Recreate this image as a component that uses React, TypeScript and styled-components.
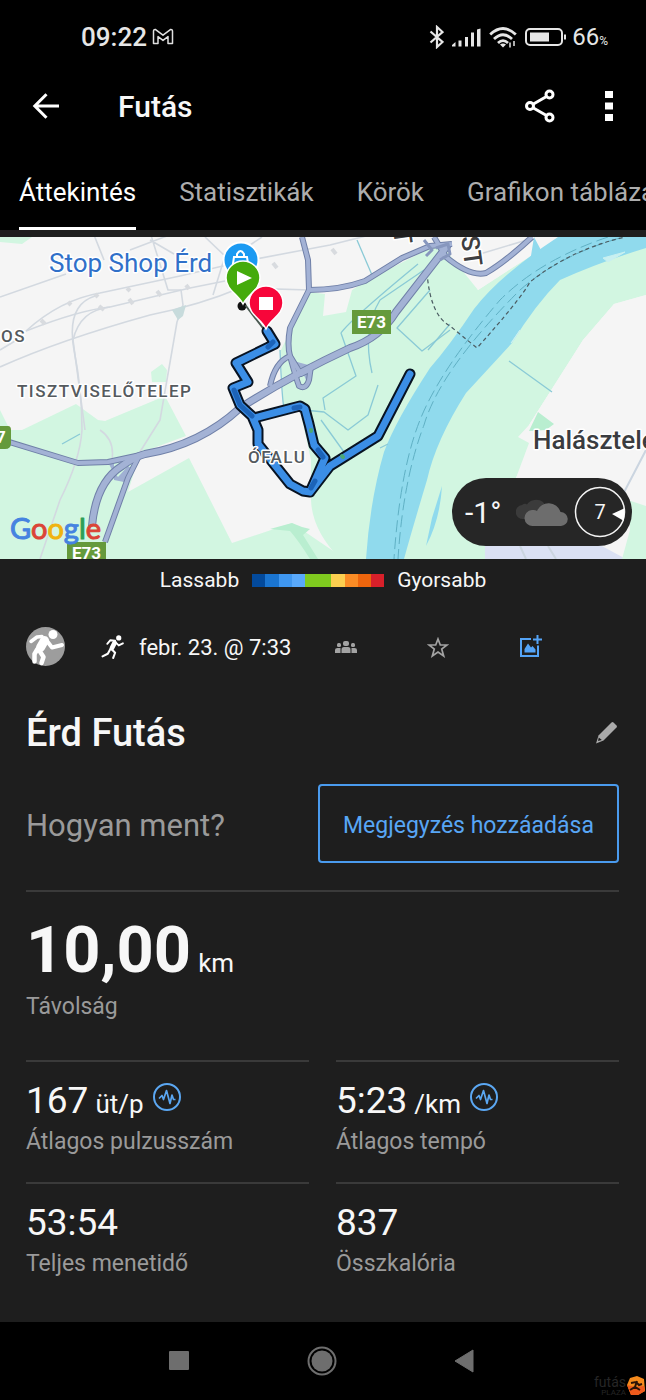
import React from "react";
import styled, { createGlobalStyle } from "styled-components";

const GlobalStyle = createGlobalStyle`
  * { box-sizing: border-box; }
  body { margin: 0; background: #000; color: #f7f7f7; font-family: Roboto, "Noto Sans", sans-serif; overflow-x: hidden; }
  button { font: inherit; color: inherit; background: none; border: 0; padding: 0; cursor: pointer; }
  h1, h2, p, dl, dd { margin: 0; font-weight: inherit; }
  svg { display: block; }
`;

const Screen = styled.div`
  min-height: 100vh;
  display: flex;
  flex-direction: column;
  background: #1e1e1e;
`;

const TopArea = styled.header`
  background: #000;
`;

const StatusBar = styled.div`
  height: 74px;
  padding: 0 38px 0 81px;
  display: flex;
  align-items: center;
  justify-content: space-between;
  color: #e6e6e6;
`;

const StatusGroup = styled.div<{ $gap: number }>`
  display: flex;
  align-items: center;
  gap: ${(p) => p.$gap}px;
`;

const Clock = styled.span`
  font-size: 26px;
  font-weight: 500;
`;

const Percent = styled.span`
  font-size: 24px;
  small { font-size: 12px; }
`;

const AppBar = styled.div`
  height: 64px;
  padding: 0 33px 0 32px;
  display: flex;
  align-items: center;
`;

const AppTitle = styled.h1`
  flex: 1;
  margin-left: 58px;
  font-size: 30px;
  font-weight: 500;
`;

const IconButton = styled.button<{ $width?: number }>`
  display: flex;
  align-items: center;
  justify-content: center;
  flex: none;
  height: 40px;
  width: ${(p) => (p.$width ? `${p.$width}px` : "auto")};
`;

const AppActions = styled.div`
  display: flex;
  gap: 50px;
`;

const Tabs = styled.nav`
  display: flex;
  gap: 43px;
  margin-top: 16px;
  padding-left: 19px;
  overflow: hidden;
`;

const Tab = styled.button<{ $active?: boolean }>`
  flex: none;
  height: 76px;
  padding-top: 3px;
  font-size: 26px;
  white-space: nowrap;
  color: ${(p) => (p.$active ? "#fff" : "#adadad")};
  border-bottom: 3px solid ${(p) => (p.$active ? "#fff" : "transparent")};
`;

const MapPanel = styled.section`
  position: relative;
  height: 322px;
  margin-top: 7px;
  overflow: hidden;
`;

const MapDrawing = styled.svg`
  width: 100%;
  height: 100%;
`;

const WeatherPill = styled.div`
  position: absolute;
  right: 14px;
  bottom: 13px;
  height: 68px;
  width: 180px;
  padding: 0 6px 0 13px;
  border-radius: 34px;
  background: #262626;
  display: flex;
  align-items: center;
  gap: 6px;
`;

const Temperature = styled.span`
  flex: 1;
  font-size: 30px;
`;

const Legend = styled.div`
  height: 42px;
  display: flex;
  align-items: center;
  justify-content: center;
  gap: 13px;
  font-size: 21px;
`;

const LegendScale = styled.div`
  display: flex;
  width: 132px;
  height: 13px;
`;

const LegendStep = styled.span<{ $color: string }>`
  flex: 1;
  background: ${(p) => p.$color};
`;

const Content = styled.main`
  flex: 1;
  padding: 0 27px 0 26px;
`;

const MetaRow = styled.div`
  height: 92px;
  display: flex;
  align-items: center;
`;

const MetaDate = styled.div`
  display: flex;
  align-items: center;
  gap: 14px;
  width: 199px;
  margin: 0 0 0 36px;
  font-size: 22px;
  white-space: nowrap;
`;

const TitleRow = styled.div`
  height: 80px;
  display: flex;
  align-items: center;
  justify-content: space-between;
`;

const ActivityName = styled.h2`
  font-size: 38px;
  font-weight: 500;
`;

const NoteRow = styled.div`
  display: flex;
  align-items: center;
  justify-content: space-between;
  padding: 11px 0 27px;
  border-bottom: 2px solid #3a3a3a;
`;

const NotePrompt = styled.p`
  padding-top: 3px;
  font-size: 31px;
  color: #9a9a9a;
`;

const NoteButton = styled.button`
  width: 301px;
  height: 79px;
  padding-top: 3px;
  border: 2px solid #4a9bee;
  border-radius: 4px;
  color: #58a6f5;
  font-size: 23px;
`;

const Distance = styled.dl`
  display: flex;
  flex-direction: column-reverse;
  gap: 7px;
  padding: 22px 0 39px;
`;

const StatGrid = styled.div`
  display: grid;
  grid-template-columns: 1fr 1fr;
  column-gap: 27px;
`;

const Stat = styled.dl`
  display: flex;
  flex-direction: column-reverse;
  justify-content: flex-end;
  gap: 5px;
  height: 122px;
  border-top: 2px solid #3a3a3a;
  padding-top: 17px;
`;

const StatLabel = styled.dt`
  font-size: 23px;
  line-height: 28px;
  color: #9a9a9a;
`;

const StatValue = styled.dd<{ $large?: boolean }>`
  display: flex;
  align-items: baseline;
  gap: 7px;
  font-size: ${(p) => (p.$large ? 65 : 37)}px;
  line-height: ${(p) => (p.$large ? 72 : 44)}px;
  font-weight: ${(p) => (p.$large ? 700 : 400)};
`;

const Unit = styled.span`
  font-size: 26px;
  line-height: 28px;
  font-weight: 400;
`;

const ChartButton = styled(IconButton)`
  align-self: flex-start;
  height: 36px;
  margin-left: 2px;
`;

const SystemNav = styled.footer`
  position: relative;
  height: 78px;
  background: #000;
  display: flex;
  align-items: center;
  justify-content: space-between;
  padding: 0 172px 0 168px;
`;

const Watermark = styled.div`
  position: absolute;
  right: 1px;
  bottom: 3px;
  display: flex;
  align-items: center;
  color: #262626;
  font-size: 14px;
  line-height: 14px;
  text-align: right;
  small { display: block; font-size: 8px; line-height: 8px; }
`;

const legendColors = ["#034a9c", "#1a75d1", "#3f97f0", "#59a9fb", "#7fca1f", "#7fca1f", "#fccf50", "#fb8c25", "#ee650d", "#d8202a"];

const MailIcon = () => (
  <svg width="22" height="18" viewBox="0 0 22 18" fill="none" stroke="#e0e0e0" strokeWidth="1.5" strokeLinejoin="round">
    <path d="M1.500 3.200Q1.500 1.200 3.600 1.600L11 7.200l7.400-5.600Q20.500 1.200 20.500 3.200V15.500H16V8.600L11 12.400 6 8.600V15.500H1.500Z" />
  </svg>
);

const BluetoothIcon = () => (
  <svg width="16" height="24" viewBox="0 0 16 24" fill="none" stroke="currentColor" strokeWidth="2.200">
    <path d="M2.500 6.500 14.500 17 9 22V2l5.500 5L2.500 17.500" />
  </svg>
);

const SignalIcon = () => (
  <svg width="29" height="19" viewBox="0 0 29 19" fill="currentColor">
    <path d="M0 18.500v-1.500l3.500-3v4.500zM6.500 12.500h3v6h-3zM13 9h3v9.500h-3zM19 4.500h3v14h-3zM25 1.500l3.500-1v18H25z" />
  </svg>
);

const WifiIcon = () => (
  <svg width="28" height="21" viewBox="0 0 28 21" fill="none" stroke="currentColor" strokeWidth="2.800">
    <path d="M1.200 7.500Q14-4.500 26.800 7.500M5 12Q14 3.500 23 12M9 16Q14 11.300 19 16" />
    <path d="M11 17.500Q14 15.500 17 17.500L14 20.500Z" fill="currentColor" stroke="none" />
    <path d="M21 15.500v5M25 14v5" strokeWidth="1.500" />
  </svg>
);

const BatteryIcon = () => (
  <svg width="42" height="18" viewBox="0 0 42 18" fill="none" stroke="currentColor" strokeWidth="2">
    <rect x="1" y="1" width="36" height="16" rx="4" />
    <rect x="5" y="4.500" width="19" height="9" fill="currentColor" stroke="none" />
    <path d="M40 6.500v5" />
  </svg>
);

const BackIcon = () => (
  <svg width="28" height="26" viewBox="0 0 28 26" fill="none" stroke="#fff" strokeWidth="3">
    <path d="M14.500 1.200 2.800 13l11.700 11.800M2.500 13H27" />
  </svg>
);

const ShareIcon = () => (
  <svg width="30" height="34" viewBox="0 0 30 34" fill="none" stroke="#fff" strokeWidth="3">
    <circle cx="5" cy="17" r="3.500" />
    <circle cx="24.500" cy="5.500" r="3.500" />
    <circle cx="24.500" cy="28.500" r="3.500" />
    <path d="M8 15.200 21.500 7.500M8 18.800 21.500 26.500" />
  </svg>
);

const MoreIcon = () => (
  <svg width="8" height="32" viewBox="0 0 8 32" fill="#fff">
    <path d="M0 1h8v7H0zM0 12.500h8v7H0zM0 24h8v7H0z" />
  </svg>
);

const AvatarIcon = () => (
  <svg width="39" height="40" viewBox="0 0 39 40" role="img" aria-label="Profil">
    <circle cx="19.500" cy="19.500" r="19.500" fill="#9d9d9d" />
    <g fill="none" stroke="#fff" strokeLinecap="round" strokeLinejoin="round">
      <circle cx="27" cy="7.500" r="4.500" fill="#fff" stroke="none" />
      <path d="M5 14.500 11 10 16 9.500" strokeWidth="3.500" />
      <path d="M18.500 13.500 14.500 20.500" strokeWidth="9" />
      <path d="M21 14 26 20.500 36 18" strokeWidth="4" />
      <path d="M11.500 22 8.500 27 8.500 34.500M13 23 17.500 30 15.500 36" strokeWidth="4.500" />
    </g>
  </svg>
);

const RunnerIcon = () => (
  <svg width="24" height="24" viewBox="0 0 22 23" fill="none" stroke="#fff" strokeLinecap="round" strokeLinejoin="round">
    <circle cx="16.500" cy="2.800" r="2.500" fill="#fff" stroke="none" />
    <path d="M5.500 8.500 8.500 5 13 5.500" strokeWidth="1.800" />
    <path d="M12.500 7.500 10 12.500" strokeWidth="4.500" />
    <path d="M14 7.500 16.500 10 20.500 8" strokeWidth="1.800" />
    <path d="M8.500 13.500 6 18 1 20.500M10 14 13 17 11.200 22" strokeWidth="2" />
  </svg>
);

const GroupIcon = () => (
  <svg width="22" height="12" viewBox="0 0 22 12" fill="#a3a3a3">
    <rect x="8" y="0" width="6" height="5" rx="2" />
    <rect x="2" y="2" width="4" height="4" rx="1.500" />
    <rect x="16" y="2" width="4" height="4" rx="1.500" />
    <path d="M6.500 12V8.500Q6.500 6 9 6h4Q15.500 6 15.500 8.500V12zM0 12V9Q0 7 2.500 7H5.500V12zM22 12V9Q22 7 19.500 7H16.500V12z" />
  </svg>
);

const StarIcon = () => (
  <svg width="22" height="21" viewBox="0 0 22 21" fill="none" stroke="#a3a3a3" strokeWidth="1.700">
    <path d="M11 2 13.300 8H20L14.700 12 16.700 19 11 15 5.300 19 7.300 12 2 8H8.700Z" />
  </svg>
);

const AddPhotoIcon = () => (
  <svg width="24" height="26" viewBox="0 0 24 26" fill="none" stroke="#54a4f7" strokeWidth="2">
    <path d="M13 5H3v17h17V11.500" />
    <path d="M19.500 1v9M15 5.500h9" />
    <path d="M6.500 18.500V15L10 9.500l3 4 1.500-1.500 3 3.500v3z" fill="#54a4f7" stroke="none" />
  </svg>
);

const PencilIcon = () => (
  <svg width="24" height="25" viewBox="0 0 24 25">
    <path d="M1 22.500 3.500 14.500 16.500 1.500Q17.500.5 18.500 1.500L21.500 4.500Q22.500 5.500 21.500 6.500L8.500 19.500Z" fill="#aaa" />
    <path d="M3.800 16.500 6.800 19 3 20Z" fill="#1e1e1e" />
  </svg>
);

const PulseIcon = () => (
  <svg width="28" height="28" viewBox="0 0 28 28" fill="none" stroke="#5ba7f2" strokeWidth="2">
    <circle cx="14" cy="14" r="13" />
    <path d="M6 15.500 9 12.500 10.500 16.500 13.500 7.500 17 20.500 19 12 20.500 16.500H22.500" strokeWidth="1.700" strokeLinejoin="round" />
  </svg>
);

const CloudIcon = () => (
  <svg width="52" height="30" viewBox="0 0 52 30">
    <path d="M7.500 22A7 7 0 0 1 6 8Q9 6 11 7.500A10.500 9 0 0 1 27 5L32 12 14 22Z" fill="#3b3b3b" />
    <path d="M17 29A8 8 0 0 1 16 13Q19 12.500 21 14A12.500 12.500 0 0 1 44.500 15 7 7 0 0 1 45 29Z" fill="#6d6d6d" />
  </svg>
);

const WindDial = () => (
  <svg width="52" height="52" viewBox="0 0 52 52" role="img" aria-label="Szél 7">
    <circle cx="26" cy="26" r="24.500" fill="none" stroke="#f5f5f5" strokeWidth="1.500" />
    <path d="M38 28 50 22.500V35Z" fill="#fff" />
    <text x="26" y="33" fontSize="20" fill="#f5f5f5" textAnchor="middle" fontFamily="Roboto">7</text>
  </svg>
);

const NavSquare = () => (
  <svg width="22" height="22" viewBox="0 0 22 22"><rect x="1" y="1" width="20" height="19" rx="1" fill="#6e6e6e" /></svg>
);
const NavCircle = () => (
  <svg width="30" height="30" viewBox="0 0 30 30">
    <circle cx="15" cy="15" r="13.500" fill="none" stroke="#6e6e6e" strokeWidth="2" />
    <circle cx="15" cy="15" r="10.500" fill="#6e6e6e" />
  </svg>
);
const NavTriangle = () => (
  <svg width="20" height="24" viewBox="0 0 20 24"><path d="M1 12 19 1V23Z" fill="#6e6e6e" stroke="#6e6e6e" strokeLinejoin="round" /></svg>
);

const motorways = [
  "M92 526Q96 482 122 466 134 457 145 454 200 445 240 408 290 376 350 348 380 338 396 312L448 245",
];

const mainRoads = [
  "M-4 438 78 463 108 462 145 454",
  "M105 542 128 478 138 458",
  "M302 237 308 260 309 290 290 328Q287 345 290 356L301 374Q312 370 312 364",
  "M309 290Q340 290 365 281L402 258 430 246 452 244",
  "M434 237 446 257Q470 277 486 273 505 262 532 237",
  "M270 386Q275 362 290 356 296 378 299 386 306 390 309 380L311 366",
];

const minorRoads = [
  "M0 297 66 274M130 250 180 231M94 235 104 260",
  "M0 367Q60 340 150 315 200 305 240 288L310 290",
  "M150 240 174 254M150 232 168 290 181 290 183 305 177 322 160 420 138 455",
  "M26 331Q60 300 100 293L180 276 240 262 330 245 430 220",
  "M26 331Q80 310 110 307L190 288 225 281",
  "M95 296Q66 305 74 350 82 390 82 430 80 460 60 500L40 559",
  "M110 307Q80 310 73 340L85 430M205 237 225 256 213 295M262 237 225 262",
  "M100 430Q115 440 112 460M0 350 20 338M480 254 530 239",
];

const streams = [
  "M357 240 372 275",
  "M418 264Q350 320 341 333L356 376 323 398 325 410",
  "M372 373Q362 330 380 300L424 270M430 290 397 328 422 351 450 330",
  "M280 350Q282 400 284 408L324 412 348 430 368 415 378 385",
  "M509 361 552 392M428 350 450 324M344 452 321 420M380 448 388 444M62 444 80 434",
];

const ROUTE = "M267 331 275 344 236 363 248 382 233 388 240 405 254 418 300 406 305 409 309 424 314 445 325 458 310 492 303 491 290 484 258 444 258 430 252 416M310 492 330 466 378 436 410 374";

const RouteMap = () => (
  <MapDrawing viewBox="0 237 646 322" preserveAspectRatio="xMidYMid slice" role="img" aria-label="Útvonal térképe">
    <rect y="237" width="646" height="322" fill="#f5f5f5" />
    <g fill="#d2f6e1">
      <path d="M0 237H32L22 244 0 242ZM151 372 162 364 167 370 166 382H152Z" />
      <path d="M0 410 10 430H22L76 404 98 420 105 421 165 396 186 436 140 453 128 492 189 458 232 543 292 523 345 559H0Z" />
      <path d="M309 292 325 294 323 316 346 312 352 290 366 281 440 243 478 290 560 237 646 237V295L614 304 583 340 529 425 540 430 516 478 485 540V559H340Q312 530 311 500V460L300 410 283 408 281 350Z" />
    </g>
    <path d="M458 245 478 290 560 237H460Z" fill="#f5f5f5" />
    <path d="M529 425 518 437 529 443 516 478 512 486 510 500 646 559V295L614 304 583 340Z" fill="#f5f5f5" />
    <path d="M529 431 538 412 554 424 546 430ZM270 529 292 523 302 527 310 529 303 535 318 559H310Q298 540 290 531Z" fill="#b9eed0" />
    <path d="M485 545H600L626 559H485Z" fill="#dbe1f4" />
    <path d="M628 500 646 506V559H622L630 530Z" fill="#d2f6e1" />
    <path d="M558 237Q500 275 474 309 450 345 430 368 396 420 384 452 370 500 366 559H404Q412 530 427 480 436 440 466 393L512 343Q535 305 560 280 600 262 646 248V237Z" fill="#90daed" />
    <path d="M534 237 542 252 530 262ZM442 486Q440 520 426 546L432 518Z" fill="#90daed" />
    <path d="M603 258 625 252 608 262ZM511 343 520 330 513 341Z" fill="#c9f0f0" stroke="#c9f0f0" />
    <g fill="none" strokeLinejoin="round">
      <g stroke="#d3d9e0" strokeWidth="1.600">{minorRoads.map((d) => <path key={d} d={d} />)}</g>
      <path d="M41 320 45 324M68 302 71 305M95 294 98 297M127 288 130 291M129 299 133 304M157 291 161 296M99 306 104 310M186 285 189 289M273 263 277 268M332 249 336 254" stroke="#d8dbdf" strokeWidth="4" />
      <path d="M172 310 186 305 183 316 178 320Z" fill="#c7dbdc" />
      <path d="M646 450 620 500M520 546 526 559M548 546 556 559" stroke="#cbd5e0" strokeWidth="2" />
      <g stroke="#8acad6" strokeWidth="1.300">{streams.map((d) => <path key={d} d={d} />)}</g>
      <path d="M608 237Q540 260 500 300 440 370 420 420 400 470 394 559M620 238Q560 255 520 290 440 370 424 425 403 480 398 559" stroke="#5fb0c4" strokeWidth="1" strokeDasharray="12 5" />
      <path d="M427 272Q430 315 450 326L477 348Q520 300 530 282 570 250 625 237" stroke="#4b5c62" strokeWidth="1.200" strokeDasharray="4 3" />
      <path d="M108 462H114V480L124 482 134 470 128 466 118 477 112 470ZM290 360 312 366 306 380 301 368Z" fill="#a0b0d3" />
      <g stroke="#7080a8">{mainRoads.map((d) => <path key={d} d={d} strokeWidth="6" />)}{motorways.map((d) => <path key={d} d={d} strokeWidth="8" />)}</g>
      <g stroke="#a3b2d5">{mainRoads.map((d) => <path key={d} d={d} strokeWidth="4" />)}{motorways.map((d) => <path key={d} d={d} strokeWidth="6" />)}</g>
      <path d="M424 240 432 250 426 256M436 248 448 244 450 254 440 260" stroke="#8797be" strokeWidth="3" />
      <g strokeLinecap="round">
        <circle cx="242" cy="306" r="4.500" fill="#111" />
        <path d="M246 306 266 332" stroke="#4b5a52" strokeWidth="2" />
        <path d={ROUTE} stroke="#081322" strokeWidth="11" />
        <path d={ROUTE} stroke="#3b8ee6" strokeWidth="7" />
        <path d="M234 390 240 405 252 416M273 342 268 347M294 408 300 407M318 450 323 457M311 488 315 481" stroke="#1c63b8" strokeWidth="5" />
        <path d="M311 430V431M343 457 342 456" stroke="#4ba876" strokeWidth="4" />
      </g>
    </g>
    <circle cx="241" cy="260" r="17.500" fill="#1b9af2" stroke="#fff" strokeWidth="2" />
    <path d="M234 257H247L249 270H232ZM237 258V254Q240.500 248 244 254V258" fill="none" stroke="#fff" strokeWidth="2" />
    <path d="M243 304C238 294 226 290 226 278A17 17 0 0 1 260 278C260 290 248 294 243 304Z" fill="#45ab0c" stroke="#fff" strokeWidth="1.500" />
    <path d="M237 271V285L252 278Z" fill="#fff" />
    <path d="M266 329C261 318 249 315 249 303A17 17 0 0 1 283 303C283 315 271 318 266 329Z" fill="#f7063a" stroke="#fff" strokeWidth="1.500" />
    <rect x="259" y="297" width="14" height="13" fill="#fff" />
    <path d="M352 310H391V334H352ZM0 426H8Q11 426 11 430V443Q11 449 5 449H0ZM67 542H106V560H67Z" fill="#659a3c" />
    <g fontFamily="Roboto" stroke="#fff" strokeWidth="3" strokeLinejoin="round" paintOrder="stroke">
      <text x="49" y="272" fontSize="26" fill="#3070c9">Stop Shop Érd</text>
      <g fill="#555a5e" fontSize="17" fontWeight="500" letterSpacing="1.500">
        <text x="1" y="342">OS</text>
        <text x="17" y="397">TISZTVISELŐTELEP</text>
        <text x="248" y="463">ÓFALU</text>
      </g>
      <text x="533" y="449" fontSize="26" fontWeight="500" fill="#3a3c40">Halásztelek</text>
      <g fill="#3e3e40" fontSize="25" fontWeight="500">
        <text transform="translate(461 237) rotate(82)">ST</text>
        <text transform="translate(393 230) rotate(82)">T</text>
      </g>
    </g>
    <g fontFamily="Roboto" fontSize="17" fontWeight="700" fill="#fff">
      <text x="357" y="328">E73</text>
      <text x="72" y="559">E73</text>
      <text x="-4" y="443">7</text>
    </g>
    <g fontFamily="Lato" fontSize="29" strokeLinejoin="round">
      <text x="10" y="539" fill="none" stroke="#fff" strokeWidth="4" aria-hidden="true" />
      <text x="10" y="539">
        <tspan fill="#4583e0" stroke="#4583e0">G</tspan><tspan fill="#db4437" stroke="#db4437">o</tspan><tspan fill="#f0b310" stroke="#f0b310">o</tspan><tspan fill="#4583e0" stroke="#4583e0">g</tspan><tspan fill="#2f9e57" stroke="#2f9e57">l</tspan><tspan fill="#db4437" stroke="#db4437">e</tspan>
      </text>
    </g>
  </MapDrawing>
);

type Metric = { label: string; value: string; unit?: string };
const metrics: Metric[] = [
  { label: "Átlagos pulzusszám", value: "167", unit: "üt/p" },
  { label: "Átlagos tempó", value: "5:23", unit: "/km" },
  { label: "Teljes menetidő", value: "53:54" },
  { label: "Összkalória", value: "837" },
];

const tabs = ["Áttekintés", "Statisztikák", "Körök", "Grafikon táblázat"];

export default function App() {
  return (
    <Screen>
      <GlobalStyle />
      <TopArea>
        <StatusBar>
          <StatusGroup $gap={5}>
            <Clock>09:22</Clock>
            <MailIcon />
          </StatusGroup>
          <StatusGroup $gap={8}>
            <BluetoothIcon />
            <SignalIcon />
            <WifiIcon />
            <StatusGroup $gap={5}>
              <BatteryIcon />
              <Percent>66<small>%</small></Percent>
            </StatusGroup>
          </StatusGroup>
        </StatusBar>
        <AppBar>
          <IconButton aria-label="Vissza"><BackIcon /></IconButton>
          <AppTitle>Futás</AppTitle>
          <AppActions>
            <IconButton aria-label="Megosztás"><ShareIcon /></IconButton>
            <IconButton aria-label="Továbbiak"><MoreIcon /></IconButton>
          </AppActions>
        </AppBar>
        <Tabs>
          {tabs.map((t, i) => <Tab key={t} $active={i === 0}>{t}</Tab>)}
        </Tabs>
      </TopArea>
      <MapPanel>
        <RouteMap />
        <WeatherPill>
          <Temperature>-1°</Temperature>
          <CloudIcon />
          <WindDial />
        </WeatherPill>
      </MapPanel>
      <Legend>
        <span>Lassabb</span>
        <LegendScale>{legendColors.map((c, i) => <LegendStep key={i} $color={c} />)}</LegendScale>
        <span>Gyorsabb</span>
      </Legend>
      <Content>
        <MetaRow>
          <AvatarIcon />
          <MetaDate><RunnerIcon /><span>febr. 23. @ 7:33</span></MetaDate>
          <IconButton $width={92} aria-label="Láthatóság"><GroupIcon /></IconButton>
          <IconButton $width={92} aria-label="Kedvenc"><StarIcon /></IconButton>
          <IconButton $width={92} aria-label="Fotó hozzáadása"><AddPhotoIcon /></IconButton>
        </MetaRow>
        <TitleRow>
          <ActivityName>Érd Futás</ActivityName>
          <IconButton aria-label="Név szerkesztése"><PencilIcon /></IconButton>
        </TitleRow>
        <NoteRow>
          <NotePrompt>Hogyan ment?</NotePrompt>
          <NoteButton>Megjegyzés hozzáadása</NoteButton>
        </NoteRow>
        <Distance>
          <StatLabel>Távolság</StatLabel>
          <StatValue $large>10,00<Unit>km</Unit></StatValue>
        </Distance>
        <StatGrid>
          {metrics.map((m) => (
            <Stat key={m.label}>
              <StatLabel>{m.label}</StatLabel>
              <StatValue>
                {m.value}
                {m.unit && <Unit>{m.unit}</Unit>}
                {m.unit && <ChartButton aria-label={`${m.label} grafikon`}><PulseIcon /></ChartButton>}
              </StatValue>
            </Stat>
          ))}
        </StatGrid>
      </Content>
      <SystemNav>
        <IconButton aria-label="Legutóbbiak"><NavSquare /></IconButton>
        <IconButton aria-label="Kezdőképernyő"><NavCircle /></IconButton>
        <IconButton aria-label="Rendszer vissza"><NavTriangle /></IconButton>
        <Watermark>
          <span>futás<small>PLAZA</small></span>
          <svg width="19" height="20" viewBox="0 0 19 20">
            <path d="M4 2 11 0 18 3 19 15 12 19 5 19 1 9Z" fill="#f58a1c" />
            <path d="M1 9 9 11 18 10 19 15 12 19 5 19Z" fill="#ee5a1c" />
            <path d="M4 14 9 11 14 14M5 7 10 6 13 9 16 8M11 5 9 11" fill="none" stroke="#2a1206" strokeWidth="2" />
          </svg>
        </Watermark>
      </SystemNav>
    </Screen>
  );
}
